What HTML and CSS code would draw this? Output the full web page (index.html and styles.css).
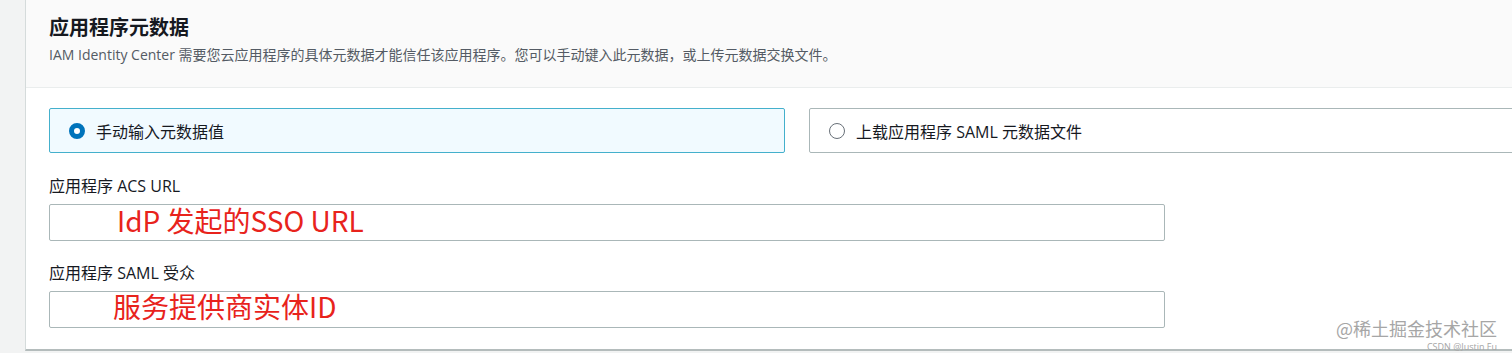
FILE: index.html
```html
<!DOCTYPE html>
<html lang="zh-CN">
<head>
    <meta charset="UTF-8">
    <meta name="viewport" content="width=device-width, initial-scale=1.0">
    <title>应用程序元数据</title>
    <link rel="stylesheet" href="styles.css">
</head>
<body>
    <div class="page">
        <div class="card">
            <div class="card-header">
                <h2>应用程序元数据</h2>
                <p class="description">IAM Identity Center 需要您云应用程序的具体元数据才能信任该应用程序。您可以手动键入此元数据，或上传元数据交换文件。</p>
            </div>
            <div class="card-body">
                <div class="tiles">
                    <label class="tile selected">
                        <span class="radio checked"></span>
                        <span>手动输入元数据值</span>
                    </label>
                    <label class="tile">
                        <span class="radio"></span>
                        <span>上载应用程序 SAML 元数据文件</span>
                    </label>
                </div>
                <div class="field">
                    <div class="field-label">应用程序 ACS URL</div>
                    <div class="field-input first"><span class="note">IdP 发起的SSO URL</span></div>
                </div>
                <div class="field">
                    <div class="field-label">应用程序 SAML 受众</div>
                    <div class="field-input second"><span class="note">服务提供商实体ID</span></div>
                </div>
            </div>
        </div>
        <div class="watermark">
            <div class="wm-main">@稀土掘金技术社区</div>
            <div class="wm-sub">CSDN @Justin Fu</div>
        </div>
    </div>
</body>
</html>
```

FILE: styles.css
```css
body {
    margin: 0;
    background-color: #f2f3f3;
    font-family: "Open Sans", "Noto Sans CJK SC", sans-serif;
    color: #16191f;
    overflow: hidden;
}

.page {
    position: relative;
    height: 353px;
    padding-left: 25px;
    overflow: hidden;
}

.card {
    height: 351px;
    background-color: #fff;
    border-left: 1px solid #d5dbdb;
    border-bottom: 2px solid #b4bcbc;
    box-sizing: border-box;
}

.card-header {
    height: 88px;
    box-sizing: border-box;
    padding: 16px 23px 0;
    background-color: #fafafa;
    border-bottom: 1px solid #eaeded;
}

.card-header h2 {
    margin: 0;
    font-size: 20px;
    line-height: 24px;
    font-weight: 700;
}

.description {
    margin: 6px 0 0;
    font-size: 14px;
    line-height: 18px;
    color: #545b64;
}

.card-body {
    padding: 20px 0 0 23px;
}

.tiles {
    display: flex;
    gap: 24px;
}

.tile {
    flex: 0 0 736px;
    height: 45px;
    box-sizing: border-box;
    display: flex;
    align-items: center;
    gap: 11px;
    padding-left: 19px;
    border: 1px solid #aab7b8;
    border-radius: 2px;
    font-size: 16px;
}

.tile.selected {
    background-color: #f1faff;
    border-color: #44b0cc;
}

.radio {
    width: 16px;
    height: 16px;
    box-sizing: border-box;
    border: 1px solid #687078;
    border-radius: 50%;
    background-color: #fff;
}

.radio.checked {
    border: 5px solid #0073bb;
}

.field {
    margin-top: 22px;
}

.field + .field {
    margin-top: 21px;
}

.field-label {
    font-size: 16px;
    line-height: 22px;
    margin-bottom: 7px;
}

.field-input {
    width: 1116px;
    height: 37px;
    box-sizing: border-box;
    border: 1px solid #aab7b8;
    border-radius: 2px;
    display: flex;
    align-items: center;
}

.note {
    color: #e8231c;
    font-family: "Noto Sans CJK SC", sans-serif;
    font-size: 28px;
    line-height: 32px;
}

.first .note {
    padding-left: 67px;
    margin-top: -5px;
}

.second .note {
    padding-left: 63px;
    margin-top: -8px;
}

.watermark {
    position: absolute;
    right: 15px;
    bottom: 0;
    text-align: right;
}

.wm-main {
    font-family: "Noto Sans CJK SC", sans-serif;
    font-size: 18px;
    line-height: 26px;
    color: #a6a6a6;
}

.wm-sub {
    font-size: 9px;
    line-height: 12px;
    color: #a6a6a6;
}
```
